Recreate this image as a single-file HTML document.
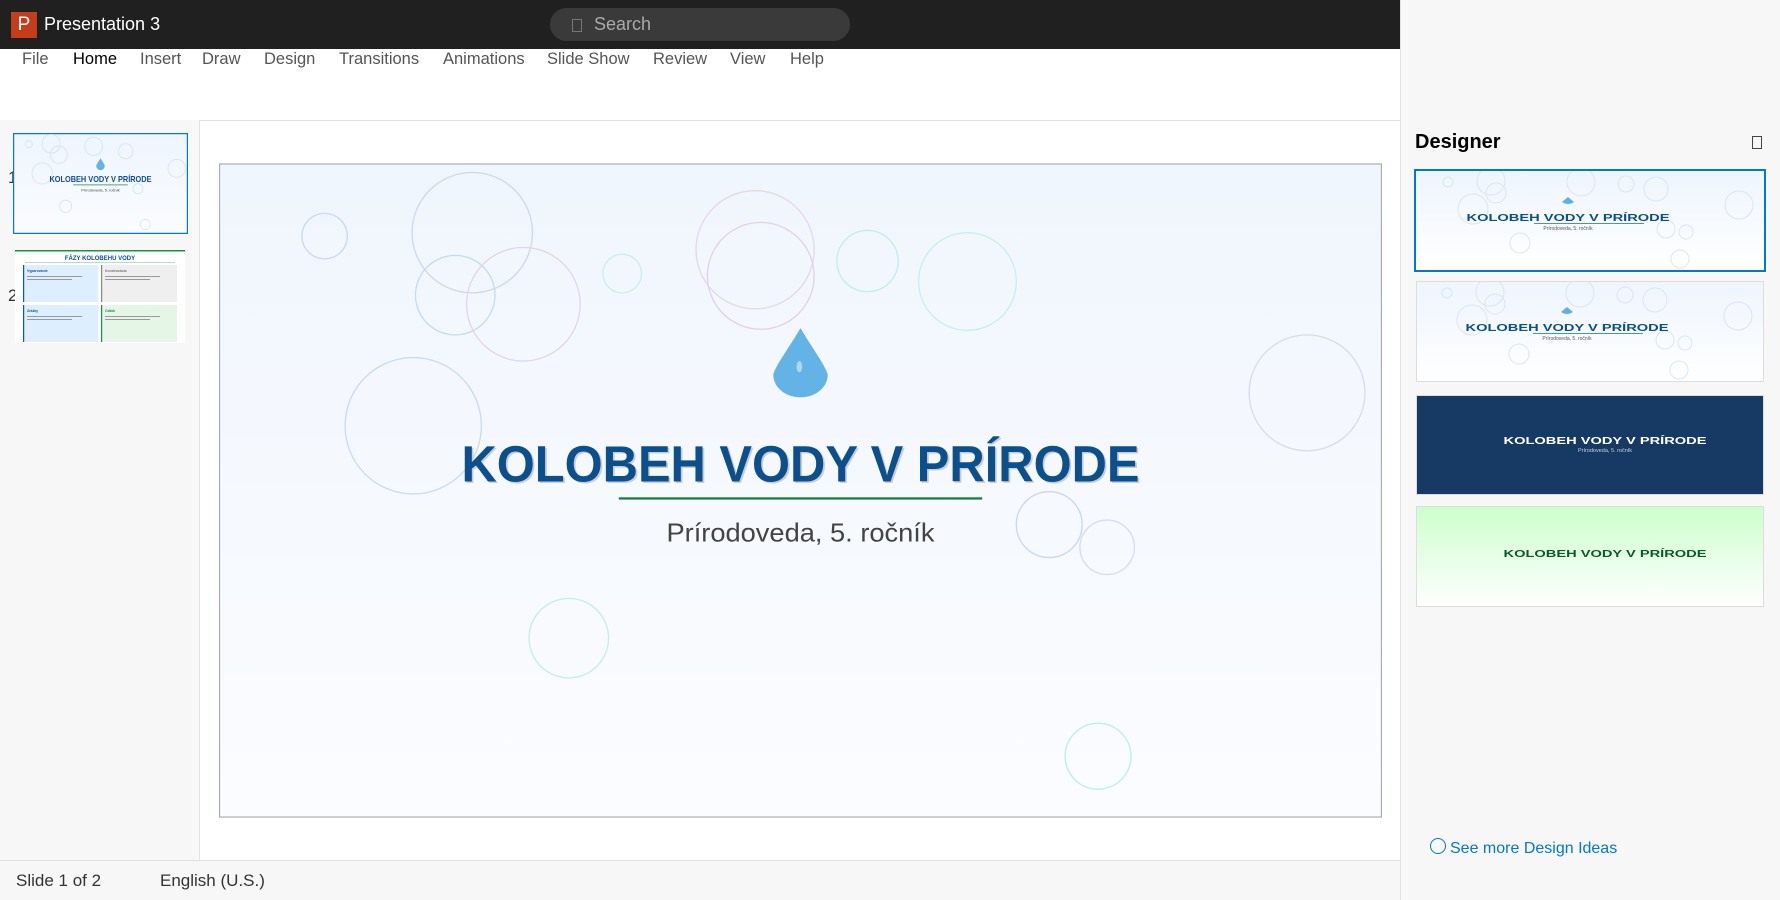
<!DOCTYPE html>
<html><head><meta charset="utf-8"><style>
*{margin:0;padding:0;box-sizing:border-box}
body{width:1780px;height:900px;overflow:hidden;font-family:"Liberation Sans",sans-serif;background:#fff;position:relative}
.abs{position:absolute}
#top{left:0;top:0;width:1400px;height:49px;background:#202020}
#logo{left:11px;top:12px;width:26px;height:26px;background:#c43e1c;color:#fff;font-size:19px;line-height:26px;text-align:center}
#ttl{left:44px;top:14px;color:#fff;font-size:18px}
#search{left:550px;top:8px;width:300px;height:33px;border-radius:17px;background:#3a3a3a;color:#aaa;font-size:18px;line-height:33px;padding-left:44px}
#search:before{content:"";position:absolute;left:22px;top:11px;width:8px;height:11px;border:1px solid #777}
.tab{top:50px;font-size:16.5px;color:#555}
#left{left:0;top:120px;width:200px;height:740px;background:#f7f7f7;border-right:1px solid #e3e3e3}
#ribline{left:0;top:120px;width:1400px;height:1px;background:#e3e3e3}
#status{left:0;top:860px;width:1400px;height:40px;background:#f7f7f7;border-top:1px solid #e0e0e0;font-size:17px;color:#333}
#right{left:1400px;top:0;width:380px;height:900px;background:#f7f7f7;border-left:1px solid #e3e3e3}
.card{position:absolute;left:1416px;width:348px;border:1px solid #ddd;overflow:hidden}
</style></head><body>
<div class="abs" id="top"></div>
<div class="abs" id="logo">P</div>
<div class="abs" id="ttl">Presentation 3</div>
<div class="abs" id="search">Search</div>
<div class="abs tab" style="left:22px">File</div>
<div class="abs tab" style="left:73px;color:#000">Home</div>
<div class="abs tab" style="left:140px">Insert</div>
<div class="abs tab" style="left:202px">Draw</div>
<div class="abs tab" style="left:264px">Design</div>
<div class="abs tab" style="left:339px">Transitions</div>
<div class="abs tab" style="left:443px">Animations</div>
<div class="abs tab" style="left:547px">Slide Show</div>
<div class="abs tab" style="left:653px">Review</div>
<div class="abs tab" style="left:730px">View</div>
<div class="abs tab" style="left:790px">Help</div>
<div class="abs" id="ribline"></div>
<div class="abs" id="left"></div>
<div class="abs" style="left:8px;top:168px;font-size:17px;color:#333">1</div>
<div class="abs" style="left:8px;top:286px;font-size:17px;color:#333">2</div>
<svg class="abs" style="left:13px;top:133px" width="175" height="101" viewBox="0 0 1024 576" preserveAspectRatio="none">
<defs><linearGradient id="g0" x1="0" y1="0" x2="0" y2="1"><stop offset="0" stop-color="#eef5fd"/><stop offset="1" stop-color="#fbfcff"/></linearGradient></defs>
<rect width="1024" height="576" fill="url(#g0)" stroke="#0078d4" stroke-width="14"/>
<g fill="none" stroke="#d4e4f4" stroke-width="5"><circle cx="93" cy="64" r="20"/><circle cx="223" cy="61" r="53"/><circle cx="268" cy="124" r="50"/><circle cx="472" cy="76" r="52"/><circle cx="659" cy="104" r="43"/><circle cx="171" cy="231" r="60"/><circle cx="958" cy="202" r="51"/><circle cx="731" cy="318" r="29"/><circle cx="308" cy="418" r="35"/><circle cx="774" cy="522" r="29"/></g>
<path d="M512 144 C500 165 487 180 487 187 A25 25 0 0 0 537 187 C537 180 524 165 512 144Z" fill="#63b3e6"/>
<text x="512" y="280" text-anchor="middle" font-size="48" font-weight="bold" fill="#0b4f8c" textLength="597" lengthAdjust="spacingAndGlyphs">KOLOBEH VODY V PRÍRODE</text>
<rect x="352" y="294" width="320" height="4" fill="#1a7f3c"/>
<text x="512" y="334" text-anchor="middle" font-size="23" fill="#444">Prírodoveda, 5. ročník</text>
</svg>
<svg class="abs" style="left:15px;top:250px" width="170" height="93" viewBox="0 0 170 93">
<rect width="170" height="93" fill="#fff"/><rect width="170" height="1.5" fill="#1a8f4a"/>
<text x="85" y="10" text-anchor="middle" font-size="6" font-weight="bold" fill="#0b4f8c">FÁZY KOLOBEHU VODY</text>
<rect x="10" y="12" width="150" height="1" fill="#b8dcc4"/>
<rect x="8" y="15" width="75" height="37" fill="#ddeeff"/><rect x="8" y="15" width="1.2" height="37" fill="#0b5aa8"/>
<rect x="86" y="15" width="76" height="37" fill="#efefef"/><rect x="86" y="15" width="1.2" height="37" fill="#888"/>
<rect x="8" y="55" width="75" height="37" fill="#ddeeff"/><rect x="8" y="55" width="1.2" height="37" fill="#0b5aa8"/>
<rect x="86" y="55" width="76" height="37" fill="#e6f6e6"/><rect x="86" y="55" width="1.2" height="37" fill="#1a8f4a"/>
<g font-size="3.5" font-weight="bold"><text x="12" y="22" fill="#0b5aa8">Vyparovanie</text><text x="90" y="22" fill="#777">Kondenzácia</text><text x="12" y="62" fill="#0b5aa8">Zrážky</text><text x="90" y="62" fill="#1a8f4a">Odtok</text></g>
<g fill="#999"><rect x="12" y="26" width="55" height="1"/><rect x="12" y="29" width="45" height="1"/><rect x="90" y="26" width="55" height="1"/><rect x="90" y="29" width="45" height="1"/><rect x="12" y="66" width="55" height="1"/><rect x="12" y="69" width="45" height="1"/><rect x="90" y="66" width="55" height="1"/><rect x="90" y="69" width="45" height="1"/></g>
</svg>
<svg class="abs" style="left:219px;top:163px" width="1163" height="655" viewBox="0 0 1024 576">
<defs><linearGradient id="g1" x1="0" y1="0" x2="0" y2="1"><stop offset="0" stop-color="#f0f6fd"/><stop offset="1" stop-color="#fbfcff"/></linearGradient></defs>
<rect x="0.5" y="0.5" width="1023" height="575" fill="url(#g1)" stroke="#aaa" stroke-width="1"/>
<g fill="none" stroke-width="1.2">
<circle cx="93" cy="64" r="20" stroke="#c8dcf0"/><circle cx="223" cy="61" r="53" stroke="#cfd8ee"/><circle cx="208" cy="116" r="35" stroke="#c4dcf2"/><circle cx="268" cy="124" r="50" stroke="#e4d4f0"/><circle cx="472" cy="76" r="52" stroke="#e4d8ee"/><circle cx="477" cy="99" r="47" stroke="#e4d0ec"/><circle cx="355" cy="97" r="17" stroke="#c8eef0"/><circle cx="571" cy="86" r="27" stroke="#bfeef0"/><circle cx="659" cy="104" r="43" stroke="#c8eef0"/><circle cx="171" cy="231" r="60" stroke="#c8dcf0"/><circle cx="958" cy="202" r="51" stroke="#d8dcef"/><circle cx="731" cy="318" r="29" stroke="#c8d8f0"/><circle cx="782" cy="338" r="24" stroke="#d8dcf0"/><circle cx="308" cy="418" r="35" stroke="#c4eeea"/><circle cx="774" cy="522" r="29" stroke="#bdeeee"/>
</g>
<path d="M512 145 C502 162 490 178 488 186 A24 20 0 0 0 536 186 C534 178 522 162 512 145Z" fill="#63b3e6"/>
<ellipse cx="511" cy="179" rx="2.5" ry="5" fill="#a8d8ff"/>
<text x="513.5" y="281.5" text-anchor="middle" font-size="45" font-weight="bold" fill="#c8ccd4" textLength="597" lengthAdjust="spacingAndGlyphs">KOLOBEH VODY V PRÍRODE</text>
<text x="512" y="280" text-anchor="middle" font-size="45" font-weight="bold" fill="#0b4f8c" textLength="597" lengthAdjust="spacingAndGlyphs">KOLOBEH VODY V PRÍRODE</text>
<rect x="352" y="294" width="320" height="2" fill="#1a7f3c"/>
<text x="512" y="333" text-anchor="middle" font-size="23" fill="#444" textLength="236" lengthAdjust="spacingAndGlyphs">Prírodoveda, 5. ročník</text>
</svg>
<div class="abs" id="status"><span class="abs" style="left:16px;top:10px">Slide 1 of 2</span><span class="abs" style="left:160px;top:10px">English (U.S.)</span></div>
<div class="abs" id="right"></div>
<div class="abs" style="left:1415px;top:131px;font-size:20px;font-weight:bold;color:#000">Designer</div>
<div class="abs" style="left:1752px;top:136px;width:10px;height:13px;border:1px solid #444"></div>
<div class="card" style="left:1414px;top:169px;width:352px;height:103px;border:2px solid #0078d4;background:linear-gradient(#eef5fd,#fff)">
<svg width="348" height="99" viewBox="0 0 348 99"><g fill="none" stroke="#d8e6f4"><circle cx="32" cy="11" r="5"/><circle cx="75" cy="10" r="14"/><circle cx="80" cy="22" r="10"/><circle cx="165" cy="11" r="14"/><circle cx="210" cy="13" r="8"/><circle cx="240" cy="18" r="12"/><circle cx="57" cy="38" r="15"/><circle cx="323" cy="34" r="14"/><circle cx="250" cy="58" r="9"/><circle cx="270" cy="61" r="7"/><circle cx="104" cy="72" r="10"/><circle cx="264" cy="88" r="9"/></g>
<path d="M152 26 L146 31 Q152 35 158 31Z" fill="#5fb0e6"/>
<text x="152" y="50" text-anchor="middle" font-size="10" font-weight="bold" fill="#0b4f8c" textLength="203" lengthAdjust="spacingAndGlyphs">KOLOBEH VODY V PRÍRODE</text>
<rect x="118" y="52" width="110" height="0.8" fill="#1a8f4a"/>
<text x="152" y="59" text-anchor="middle" font-size="5" fill="#555">Prírodoveda, 5. ročník</text></svg></div>
<div class="card" style="top:281px;height:101px;background:linear-gradient(#eef5fd,#fff)">
<svg width="348" height="99" viewBox="0 0 348 99"><g fill="none" stroke="#d8e6f4"><circle cx="30" cy="11" r="5"/><circle cx="73" cy="10" r="14"/><circle cx="78" cy="22" r="10"/><circle cx="163" cy="11" r="14"/><circle cx="208" cy="13" r="8"/><circle cx="238" cy="18" r="12"/><circle cx="55" cy="38" r="15"/><circle cx="321" cy="34" r="14"/><circle cx="248" cy="58" r="9"/><circle cx="268" cy="61" r="7"/><circle cx="102" cy="72" r="10"/><circle cx="262" cy="88" r="9"/></g>
<path d="M150 25 L144 30 Q150 34 156 30Z" fill="#5fb0e6"/>
<text x="150" y="49" text-anchor="middle" font-size="10" font-weight="bold" fill="#0b4f8c" textLength="203" lengthAdjust="spacingAndGlyphs">KOLOBEH VODY V PRÍRODE</text>
<rect x="116" y="51" width="110" height="0.8" fill="#1a8f4a"/>
<text x="150" y="58" text-anchor="middle" font-size="5" fill="#555">Prírodoveda, 5. ročník</text></svg></div>
<div class="card" style="top:395px;height:100px;background:#163a63">
<svg width="348" height="98" viewBox="0 0 348 98"><text x="188" y="48" text-anchor="middle" font-size="10" font-weight="bold" fill="#fff" textLength="203" lengthAdjust="spacingAndGlyphs">KOLOBEH VODY V PRÍRODE</text>
<text x="188" y="56" text-anchor="middle" font-size="5.5" fill="#c8d4e4">Prírodoveda, 5. ročník</text></svg></div>
<div class="card" style="top:506px;height:101px;background:linear-gradient(#ccffcc,#fff)">
<svg width="348" height="99" viewBox="0 0 348 99"><text x="188" y="50" text-anchor="middle" font-size="10" font-weight="bold" fill="#0b5a2a" textLength="203" lengthAdjust="spacingAndGlyphs">KOLOBEH VODY V PRÍRODE</text></svg></div>
<div class="abs" style="left:1430px;top:838px;width:16px;height:16px;border:1px solid #0078d4;border-radius:50%"></div>
<div class="abs" style="left:1450px;top:840px;font-size:16px;color:#0078d4">See more Design Ideas</div>
</body></html>
